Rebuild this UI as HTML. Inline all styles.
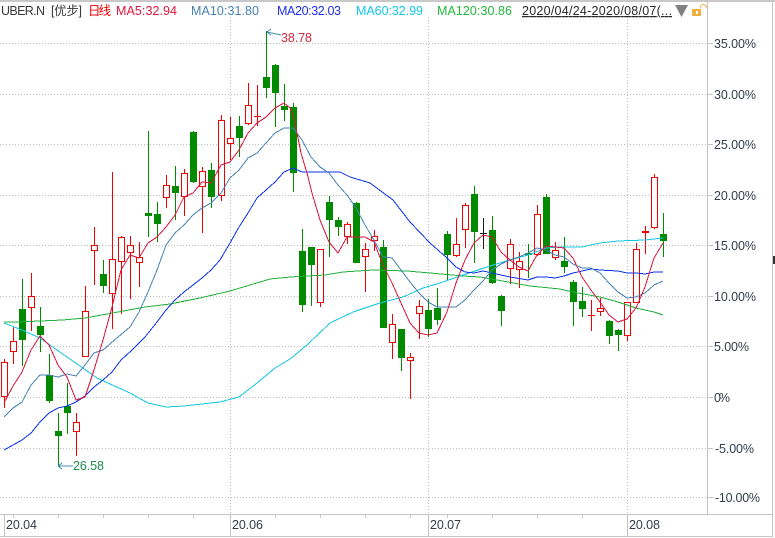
<!DOCTYPE html>
<html><head><meta charset="utf-8"><style>
html,body{margin:0;padding:0;background:#fff;width:775px;height:538px;overflow:hidden}
svg{display:block}
text{font-family:"Liberation Sans","Noto Sans CJK SC",sans-serif;font-size:12.5px}
</style></head><body>
<svg width="775" height="538" viewBox="0 0 775 538" xmlns="http://www.w3.org/2000/svg">
<rect width="775" height="538" fill="#fff"/>
<rect width="775" height="2" fill="#c8c8c8"/>
<g shape-rendering="crispEdges" fill="none">
<path stroke="#bdbdbd" stroke-dasharray="1 2" d="M0 43.5H707M0 94.5H707M0 144.5H707M0 195.5H707M0 245.5H707M0 296.5H707M0 346.5H707M0 397.5H707M0 448.5H707M0 497.5H707M230.5 17V514M428.5 17V514M627.5 17V514"/>
<path stroke="#c4c4c4" d="M707.5 2V514M0 514.5H772M0 536.5H773M4.5 514V536M230.5 514V536M428.5 514V536M627.5 514V536M772.5 2V537M707 43.5h6M707 94.5h6M707 144.5h6M707 195.5h6M707 245.5h6M707 296.5h6M707 346.5h6M707 397.5h6M707 448.5h6M707 497.5h6M13.5 514v4M58.5 514v4M103.5 514v4M148.5 514v4M193.5 514v4M275.5 514v4M320.5 514v4M365.5 514v4M410.5 514v4M447.5 514v4M492.5 514v4M537.5 514v4M582.5 514v4"/>
<path stroke="#008a00" d="M22.5 279V366M40.5 307V352M49.5 354V403M58.5 413V466M67.5 383V434M103.5 260V293M148.5 131V237M157.5 202V242M175.5 166V220M193.5 131V183M211.5 163V208M239.5 116V157M266.5 31V98M275.5 64V127M284.5 84V121M293.5 103V192M302.5 229V312M311.5 247V306M329.5 196V257M338.5 217V236M356.5 202V263M383.5 240V328M401.5 329V371M428.5 299V337M437.5 288V325M447.5 231V281M474.5 186V263M492.5 216V284M501.5 295V326M528.5 244V278M546.5 194V254M564.5 237V273M573.5 280V326M582.5 287V317M609.5 320V344M618.5 329V351M663.5 213V257"/>
<path stroke="#008a00" stroke-width="7" d="M22.5 309V340M40.5 326V335M49.5 375V401M58.5 431V436M67.5 406V413M103.5 274V286M148.5 213V216M157.5 214V224M175.5 186V193M193.5 132V182M211.5 170V197M239.5 126V138M266.5 77V88M275.5 65V93M284.5 106V110M293.5 107V173M302.5 251V305M311.5 247V265M329.5 202V220M338.5 220V227M356.5 203V263M383.5 247V328M401.5 329V358M428.5 310V329M437.5 308V320M447.5 234V255M474.5 194V232M492.5 230V283M501.5 296V311M528.5 253V255M546.5 197V254M564.5 261V267M573.5 282V302M582.5 301V309M609.5 321V336M618.5 330V335M663.5 234V241"/>
<path stroke="#f00000" d="M4.5 359V408M13.5 327V364M31.5 273V331M76.5 413V456M85.5 286V357M94.5 227V285M112.5 172V329M121.5 236V314M130.5 236V299M139.5 242V287M166.5 175V208M184.5 169V216M202.5 167V233M221.5 115V201M230.5 117V160M248.5 83V125M257.5 85V126M320.5 249V307M347.5 222V244M365.5 243V292M374.5 230V251M392.5 314V359M410.5 353V399M419.5 300V339M456.5 218V257M465.5 203V248M510.5 239V284M519.5 252V288M537.5 205V256M555.5 242V260M591.5 300V331M600.5 298V316M627.5 302V341M636.5 243V303M645.5 226V254M654.5 174V229M254 116.5h7M588 315.5h7"/>
<path stroke="#f00000" fill="#fff" d="M1.5 362.5h6V396.5h-6zM10.5 341.5h6V351.5h-6zM28.5 296.5h6V307.5h-6zM73.5 422.5h6V431.5h-6zM82.5 311.5h6V356.5h-6zM91.5 245.5h6V250.5h-6zM109.5 259.5h6V293.5h-6zM118.5 237.5h6V261.5h-6zM127.5 245.5h6V252.5h-6zM136.5 257.5h6V262.5h-6zM163.5 185.5h6V197.5h-6zM181.5 173.5h6V196.5h-6zM199.5 171.5h6V186.5h-6zM218.5 120.5h6V195.5h-6zM227.5 138.5h6V143.5h-6zM245.5 105.5h6V123.5h-6zM317.5 249.5h6V302.5h-6zM344.5 224.5h6V236.5h-6zM362.5 249.5h6V256.5h-6zM371.5 236.5h6V240.5h-6zM389.5 324.5h6V342.5h-6zM407.5 357.5h6V360.5h-6zM416.5 306.5h6V313.5h-6zM453.5 244.5h6V255.5h-6zM462.5 205.5h6V229.5h-6zM507.5 244.5h6V268.5h-6zM516.5 261.5h6V269.5h-6zM534.5 214.5h6V254.5h-6zM552.5 250.5h6V257.5h-6zM597.5 308.5h6V311.5h-6zM624.5 302.5h6V335.5h-6zM633.5 249.5h6V302.5h-6zM642.5 231.5h6V232.5h-6zM651.5 177.5h6V227.5h-6z"/>
<path stroke="#1a1a1a" d="M483.5 218V249M480 233.5h7"/>
<!-- MA120 -->
<polyline stroke="#22b03c" points="4,322 17,322 63,320 85,318 118,312 145,307 170,304 200,298 230,291 250,285 270,279 290,277 325,275 343,272 373,270 407,271 430,273 463,276 480,277 497,280 530,286 560,289 573,292 600,297 618,302 636,308 654,312 663,315"/>
<!-- MA60 -->
<polyline stroke="#12c8e0" points="4,323 22,330 40,338 67,357 97,378 130,393 148,403 166,407 184,406 202,404 220,402 239,397 257,383 275,368 290,359 307,345 330,323 353,312 380,303 403,297 423,288 440,283 463,275 493,265 510,260 528,255 546,248 560,247 582,247 600,243 618,241 645,240 663,238"/>
<!-- MA20 -->
<polyline stroke="#0a32f0" points="4,450 13,445 22,440 31,433 40,422 49,413 58,408 67,406 76,402 85,396 94,387 103,380 112,372 121,360 132,350 145,337 157,322 166,310 175,300 184,292 193,285 202,278 211,270 220,260 230,243 239,227 248,213 257,198 266,190 275,182 284,172 293,168 302,172 311,172 320,172 340,172 350,177 370,183 393,200 410,222 430,243 447,258 456,267 465,272 474,273 483,271 492,273 501,275 510,277 528,280 537,277 546,277 555,278 564,276 573,273 582,271 591,269 600,270 618,271 627,273 636,273 645,274 654,272 663,272"/>
<!-- MA10 -->
<polyline stroke="#4682b4" points="4,417 13,408 22,402 31,385 40,375 49,375 58,377 67,374 76,376 85,365 94,353 103,350 118,337 130,327 139,312 148,292 157,270 166,245 175,233 184,225 193,215 202,208 211,203 221,193 230,178 239,170 248,158 257,153 266,143 275,133 284,128 293,128 302,140 311,157 320,167 329,173 338,185 347,195 356,208 365,225 374,240 383,257 392,258 401,270 410,282 419,293 428,302 437,307 447,307 456,307 465,300 474,290 483,281 492,270 501,264 510,260 519,257 528,253 537,248 546,250 555,255 564,257 573,264 582,268 591,268 600,273 609,283 618,292 627,298 636,297 645,293 654,285 663,281"/>
<!-- MA5 -->
<polyline stroke="#dc143c" points="4,403 13,386 22,372 31,350 40,336 49,345 58,365 67,377 76,400 85,397 94,370 103,340 112,307 121,270 130,255 139,258 148,243 157,237 166,227 175,215 184,197 193,193 202,182 211,183 221,165 230,162 239,150 248,133 257,123 266,117 275,108 284,103 290,108 293,115 297,133 301,153 307,173 312,193 320,220 329,242 338,253 347,237 356,237 365,237 374,242 383,265 392,283 401,303 410,323 419,333 428,335 437,333 447,312 456,283 465,260 474,243 483,235 492,237 501,252 510,260 519,267 528,271 537,255 546,246 555,247 564,248 573,258 582,277 591,290 600,302 609,315 618,322 627,319 636,308 645,287 654,258 663,243"/>
<path stroke="#3f8fb0" d="M267 32L281 35M267 32l4-3M267 32l4 3M58 466H73M58 466l4-3M58 466l4 3"/>
</g>
<rect x="773" y="256" width="2" height="8" fill="#333"/>
<text x="1" y="15" fill="#3a3a3a" textLength="44">UBER.N</text>
<text x="51" y="15" fill="#3a3a3a" textLength="31">[优步]</text>
<text x="88" y="15" fill="#f00000" textLength="23">日线</text>
<text x="116" y="15" fill="#dc143c" textLength="61">MA5:32.94</text>
<text x="191" y="15" fill="#4682b4" textLength="68">MA10:31.80</text>
<text x="277" y="15" fill="#1e30f0" textLength="64">MA20:32.03</text>
<text x="356" y="15" fill="#12c8e8" textLength="67">MA60:32.99</text>
<text x="437" y="15" fill="#22b83c" textLength="75">MA120:30.86</text>
<text x="522" y="15" fill="#2a2a2a" textLength="150" text-decoration="underline">2020/04/24-2020/08/07(...</text>
<path d="M675 5H688L681.5 17Z" fill="#808080"/>
<rect x="692" y="9" width="9" height="7" fill="#f0b040"/>
<rect x="696" y="11" width="2" height="3" fill="#fff"/>
<path d="M700 8.5a3.5 4 0 0 1 7 0" fill="none" stroke="#f0b040"/>
<g fill="#333b4a">
<text x="714" y="48" textLength="42">35.00%</text>
<text x="714" y="99" textLength="42">30.00%</text>
<text x="714" y="149" textLength="42">25.00%</text>
<text x="714" y="200" textLength="42">20.00%</text>
<text x="714" y="250" textLength="42">15.00%</text>
<text x="714" y="301" textLength="42">10.00%</text>
<text x="714" y="351" textLength="35">5.00%</text>
<text x="714" y="402" textLength="16">0%</text>
<text x="715" y="453" textLength="39">-5.00%</text>
<text x="715" y="502" textLength="45">-10.00%</text>
<text x="6" y="529" textLength="31">20.04</text>
<text x="232" y="529" textLength="31">20.06</text>
<text x="430" y="529" textLength="31">20.07</text>
<text x="629" y="529" textLength="31">20.08</text>
</g>
<text x="281" y="42" fill="#c8283c" textLength="31">38.78</text>
<text x="73" y="470" fill="#1f8a50" textLength="31">26.58</text>
</svg>
</body></html>
